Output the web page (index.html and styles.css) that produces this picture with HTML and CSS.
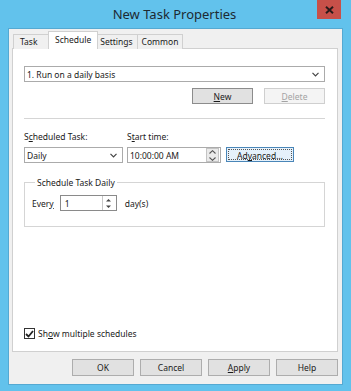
FILE: index.html
```html
<!DOCTYPE html>
<html lang="en">
<head>
    <meta charset="UTF-8">
    <title>New Task Properties</title>
    <link rel="stylesheet" href="styles.css">
</head>
<body>
    <div class="window">
        <div class="titlebar">
            <span></span>
            <span class="title">New Task Properties</span>
            <div class="close" aria-label="Close">
                <svg width="9" height="8" viewBox="0 0 9 8"><path d="M1 0.8 L8 7.2 M8 0.8 L1 7.2" stroke="#2a1a1a" stroke-width="2"/></svg>
            </div>
        </div>

        <div class="client">
            <div class="tabs">
                <div class="tab first">Task</div>
                <div class="tab active">Schedule</div>
                <div class="tab">Settings</div>
                <div class="tab">Common</div>
            </div>

            <div class="panel">
                <div class="combo">
                    <span>1. Run on a daily basis</span>
                    <svg class="chev" width="7" height="5" viewBox="0 0 7 5"><path d="M0.5 0.8 L3.5 3.8 L6.5 0.8" fill="none" stroke="#444" stroke-width="1.2"/></svg>
                </div>

                <div class="btn-row">
                    <button class="btn default"><u>N</u>ew</button>
                    <button class="btn" disabled><u>D</u>elete</button>
                </div>

                <div class="sep"></div>

                <div class="fields">
                    <div class="field daily">
                        <label>S<u>c</u>heduled Task:</label>
                        <div class="combo">
                            <span>Daily</span>
                            <svg class="chev" width="7" height="5" viewBox="0 0 7 5"><path d="M0.5 0.8 L3.5 3.8 L6.5 0.8" fill="none" stroke="#444" stroke-width="1.2"/></svg>
                        </div>
                    </div>
                    <div class="field time">
                        <label>S<u>t</u>art time:</label>
                        <div class="spin">
                            <span>10:00:00 AM</span>
                            <span class="spin-btns boxed">
                                <svg width="7" height="4" viewBox="0 0 7 4"><path d="M0.5 3.5 L3.5 0.7 L6.5 3.5" fill="none" stroke="#555" stroke-width="1.1"/></svg>
                                <svg width="7" height="4" viewBox="0 0 7 4"><path d="M0.5 0.5 L3.5 3.3 L6.5 0.5" fill="none" stroke="#555" stroke-width="1.1"/></svg>
                            </span>
                        </div>
                    </div>
                    <button class="btn focused"><span class="focus-ring">Ad<u>v</u>anced...</span></button>
                </div>

                <fieldset class="group">
                    <legend>Schedule Task Daily</legend>
                    <div class="every">
                        <span>Ever<u>y</u></span>
                        <div class="spin small">
                            <span>1</span>
                            <span class="spin-btns">
                                <svg width="7" height="4" viewBox="0 0 7 4"><path d="M1 3.5 L3.5 1 L6 3.5 Z" fill="#444"/></svg>
                                <svg width="7" height="4" viewBox="0 0 7 4"><path d="M1 0.5 L3.5 3 L6 0.5 Z" fill="#444"/></svg>
                            </span>
                        </div>
                        <span>day(s)</span>
                    </div>
                </fieldset>

                <label class="check">
                    <span class="box">
                        <svg width="9" height="8" viewBox="0 0 9 8"><path d="M1 4 L3.5 6.5 L8 1" fill="none" stroke="#222" stroke-width="1.8"/></svg>
                    </span>
                    <span>Sh<u>o</u>w multiple schedules</span>
                </label>
            </div>

            <div class="actions">
                <button class="btn">OK</button>
                <button class="btn">Cancel</button>
                <button class="btn"><u>A</u>pply</button>
                <button class="btn">Help</button>
            </div>
        </div>
    </div>
</body>
</html>
```

FILE: styles.css
```css
* {
    box-sizing: border-box;
}

body {
    margin: 0;
    font-family: "Noto Sans", "Open Sans", sans-serif;
    font-size: 8.5px;
    color: #1a1a1a;
}

u {
    text-decoration-thickness: 1px;
    text-underline-offset: 1px;
}

.window {
    width: 351px;
    height: 391px;
    background: #62c2ec;
    padding: 0 8px 6px 8px;
    display: flex;
    flex-direction: column;
}

.titlebar {
    height: 28px;
    display: grid;
    grid-template-columns: 1fr auto 1fr;
    margin-right: 2px;
}

.title {
    font-size: 13px;
    color: #1d2a33;
    align-self: center;
    line-height: 16px;
    margin-top: -1px;
}

.close {
    justify-self: end;
    align-self: start;
    width: 24px;
    height: 19px;
    background: #c75049;
    display: flex;
    align-items: center;
    justify-content: center;
}

.client {
    flex: 1;
    background: #f0f0f0;
    border: 1px solid #55a9d2;
    padding: 3px 4px 8px 3px;
    display: flex;
    flex-direction: column;
}

.tabs {
    display: flex;
    align-items: flex-end;
    height: 17px;
    padding-left: 2px;
    position: relative;
    z-index: 1;
}

.tab {
    height: 15px;
    line-height: 13px;
    padding: 0 4px;
    border: 1px solid #d0d0d0;
    border-bottom: none;
    background: #f0f0f0;
    margin-left: -1px;
}

.tab.first {
    width: 37px;
    padding-left: 6px;
}

.tab.active {
    height: 18px;
    margin: 0 -2px 0 -2px;
    padding: 0 6px;
    background: #fff;
    line-height: 15px;
    position: relative;
}

.panel {
    height: 304px;
    margin-top: -1px;
    background: #fff;
    border: 1px solid #d0d0d0;
    padding: 17px 12px 12px 11px;
    display: flex;
    flex-direction: column;
}

.combo,
.spin {
    height: 16px;
    border: 1px solid #ababab;
    background: #fff;
    display: flex;
    align-items: center;
    justify-content: space-between;
    padding: 0 5px 0 2px;
}

.chev {
    flex: none;
}

.btn-row {
    display: flex;
    justify-content: flex-end;
    gap: 11px;
    margin-top: 6px;
}

.btn {
    width: 61px;
    height: 16px;
    padding: 0;
    font: inherit;
    color: #1a1a1a;
    background: #e1e1e1;
    border: 1px solid #adadad;
}

.btn.default {
    border-color: #8c8c8c;
}

.btn:disabled {
    background: #f4f4f4;
    border-color: #cfcfcf;
    color: #a3a3a3;
}

.sep {
    height: 1px;
    background: #d5d5d5;
    margin-top: 14px;
}

.fields {
    display: flex;
    align-items: flex-end;
    margin-top: 12px;
}

.field {
    display: flex;
    flex-direction: column;
    gap: 4px;
}

.field label {
    line-height: 12px;
}

.field.daily {
    width: 99px;
}

.field.time {
    width: 94px;
    margin-left: 4px;
}

.spin {
    padding-right: 1px;
}

.spin-btns {
    display: flex;
    flex-direction: column;
    justify-content: center;
    align-items: center;
    gap: 2px;
    width: 13px;
    height: 14px;
}

.spin-btns.boxed {
    background: #eaeaea;
    border: 1px solid #c4c4c4;
    gap: 3px;
}

.btn.focused {
    width: 68px;
    height: 15px;
    margin-left: 5px;
    margin-bottom: 1px;
    background: #e5f1fb;
    border-color: #4a86b8;
    padding: 1px;
}

.focus-ring {
    display: block;
    height: 100%;
    line-height: 11px;
    border: 1px dotted #555;
}

.group {
    margin: 14px 0 0 0;
    height: 50px;
    border: 1px solid #d5d5d5;
    padding: 7px 7px 0 7px;
}

.group legend {
    padding: 0 2px;
    margin-left: 3px;
    line-height: 11px;
}

.every {
    display: flex;
    align-items: center;
    gap: 6px;
}

.spin.small {
    width: 57px;
    padding-left: 4px;
    border-color: #8a8a8a;
}

.spin.small .spin-btns {
    border-left: 1px solid #c8c8c8;
    gap: 3px;
}

.every > span:last-child {
    margin-left: 2px;
}

.check {
    margin-top: auto;
    display: flex;
    align-items: center;
    gap: 3px;
}

.check .box {
    width: 11px;
    height: 11px;
    border: 1px solid #333;
    background: #fff;
    display: flex;
    align-items: center;
    justify-content: center;
}

.actions {
    display: flex;
    justify-content: flex-end;
    gap: 6px;
    margin-top: 7px;
}

.actions .btn {
    width: 62px;
    height: 17px;
}
```
